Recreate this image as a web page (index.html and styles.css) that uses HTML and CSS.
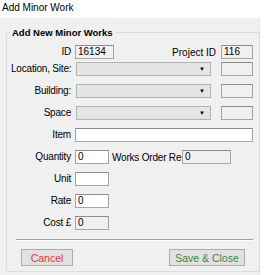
FILE: index.html
```html
<!DOCTYPE html>
<html lang="en">
<head>
  <meta charset="UTF-8">
  <title>Add Minor Work</title>
  <link rel="stylesheet" href="styles.css">
</head>
<body>

  <div class="title">Add Minor Work</div>

  <div class="panel">
    <fieldset class="group">
      <legend>Add New Minor Works</legend>

      <div class="form">
        <label>ID</label>
        <div class="line">
          <span class="box ro w-id">16134</span>
          <span class="side-label">Project ID</span>
          <span class="box ro w-small">116</span>
        </div>

        <label>Location, Site:</label>
        <div class="line spread">
          <span class="combo"><span class="arrow">&#9660;</span></span>
          <span class="box ro w-small"></span>
        </div>

        <label>Building:</label>
        <div class="line spread">
          <span class="combo"><span class="arrow">&#9660;</span></span>
          <span class="box ro w-small"></span>
        </div>

        <label>Space</label>
        <div class="line spread">
          <span class="combo"><span class="arrow">&#9660;</span></span>
          <span class="box ro w-small"></span>
        </div>

        <label>Item</label>
        <div class="line">
          <span class="box w-full"></span>
        </div>

        <label>Quantity</label>
        <div class="line">
          <span class="box w-num">0</span>
          <span class="inline-label">Works Order Re</span>
          <span class="box ro w-order">0</span>
        </div>

        <label>Unit</label>
        <div class="line">
          <span class="box w-num"></span>
        </div>

        <label>Rate</label>
        <div class="line">
          <span class="box w-num">0</span>
        </div>

        <label>Cost £</label>
        <div class="line">
          <span class="box ro w-num">0</span>
        </div>
      </div>

      <hr class="sep">

      <div class="buttons">
        <button class="btn cancel">Cancel</button>
        <button class="btn save">Save &amp; Close</button>
      </div>
    </fieldset>
  </div>

</body>
</html>
```

FILE: styles.css
```css
body {
  margin: 0;
  font-family: "Liberation Sans", Arial, sans-serif;
  font-size: 10px;
  color: #000;
  background: #fff;
  width: 264px;
  height: 275px;
  overflow: hidden;
}
.title {
  height: 18px;
  line-height: 15px;
  padding-left: 2px;
}
.panel {
  background: #f0f0f0;
  width: 260px;
  height: 257px;
  padding-top: 8px;
  box-sizing: border-box;
  border-right: 1px solid #e4e4e4;
}
.group {
  margin: 0 0 0 6px;
  width: 253px;
  height: 246px;
  box-sizing: border-box;
  border: 1px solid #dcdcdc;
  padding: 0 6px 0 4px;
}
.group legend {
  font-weight: bold;
  font-size: 9.5px;
  line-height: 13px;
  padding: 0 2px;
  margin-left: -1px;
}
.form {
  display: grid;
  grid-template-columns: 60px 1fr;
  grid-template-rows: 17px repeat(7, 22px) 14px;
  column-gap: 4px;
  align-items: start;
  padding-top: 6px;
}
.form label {
  text-align: right;
  line-height: 14px;
  height: 14px;
  white-space: nowrap;
  letter-spacing: -0.2px;
}
.line {
  display: flex;
  align-items: center;
  height: 14px;
}
.line.spread {
  justify-content: space-between;
}
.box {
  box-sizing: border-box;
  height: 14px;
  line-height: 12px;
  padding-left: 2px;
  background: #fff;
  border: 1px solid #a6a6a6;
  border-top-color: #8c8c8c;
}
.box.ro {
  background: #f0f0f0;
}
.w-id { width: 39px; }
.w-small { width: 32px; }
.w-full { width: 178px; }
.w-num { width: 34px; }
.w-order { width: 49px; }
.side-label {
  margin-left: auto;
  margin-right: 5px;
}
.inline-label {
  width: 70px;
  margin-left: 3px;
  white-space: nowrap;
  overflow: hidden;
  letter-spacing: -0.2px;
}
.combo {
  box-sizing: border-box;
  width: 135px;
  height: 14px;
  margin-left: 1px;
  background: #e5e5e5;
  border: 1px solid #b4b4b4;
  display: flex;
  justify-content: flex-end;
  align-items: center;
  padding-right: 5px;
}
.arrow {
  font-size: 6px;
  line-height: 6px;
}
.sep {
  margin: 9px 0 0 5px;
  border: 0;
  border-top: 1px solid #a0a0a0;
  border-bottom: 1px solid #fff;
  height: 0;
}
.buttons {
  display: flex;
  justify-content: space-between;
  margin: 8px 8px 0 10px;
}
.btn {
  font-family: "Liberation Sans", Arial, sans-serif;
  font-size: 10.5px;
  height: 17px;
  padding: 0;
  background: #e1e1e1;
  border: 1px solid #adadad;
}
.cancel {
  width: 52px;
  color: #e8343f;
}
.save {
  width: 76px;
  color: #3b8a3b;
}
```
